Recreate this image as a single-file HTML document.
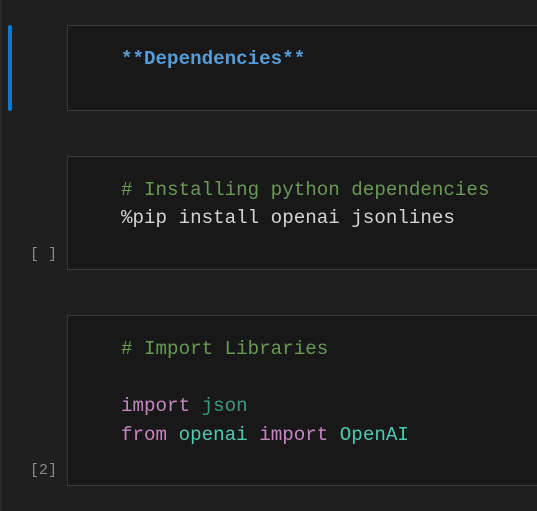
<!DOCTYPE html>
<html><head><style>
body{margin:0;width:537px;height:511px;background:#1f1f1f;overflow:hidden;position:relative;font-family:"Liberation Mono",monospace;}
.edge{position:absolute;left:0;top:0;width:2px;height:511px;background:#2a2a2a;}
.cell{position:absolute;left:67px;width:480px;background:#181818;border:1px solid #3a3a3a;box-sizing:border-box;}
.t{position:absolute;left:121px;font-size:19.2px;white-space:pre;line-height:28px;}
.bar{position:absolute;left:8px;top:25px;width:4px;height:86px;background:#0b78d4;border-radius:2px;}
.lbl{position:absolute;left:30px;font-size:15px;color:#8a8a8a;}
.c{color:#6a9955}.w{color:#d4d4d4}.k{color:#c586c0}.g{color:#4ec9b0}.j{color:#3a9a82}
</style></head><body>
<div class="edge"></div>
<div class="bar"></div>
<div class="cell" style="top:25px;height:86px"></div>
<div class="cell" style="top:156px;height:114px"></div>
<div class="cell" style="top:315px;height:171px"></div>
<div class="t" style="top:45px;color:#569cd6;font-weight:bold">**Dependencies**</div>
<div class="t" style="top:176px"><span class="c"># Installing python dependencies</span>
<span class="w">%pip install openai jsonlines</span></div>
<div class="lbl" style="top:246px">[ ]</div>
<div class="t" style="top:335px;line-height:28.5px"><span class="c"># Import Libraries</span>

<span class="k">import</span> <span class="j">json</span>
<span class="k">from</span> <span class="g">openai</span> <span class="k">import</span> <span class="g">OpenAI</span></div>
<div class="lbl" style="top:462px">[2]</div>
</body></html>
